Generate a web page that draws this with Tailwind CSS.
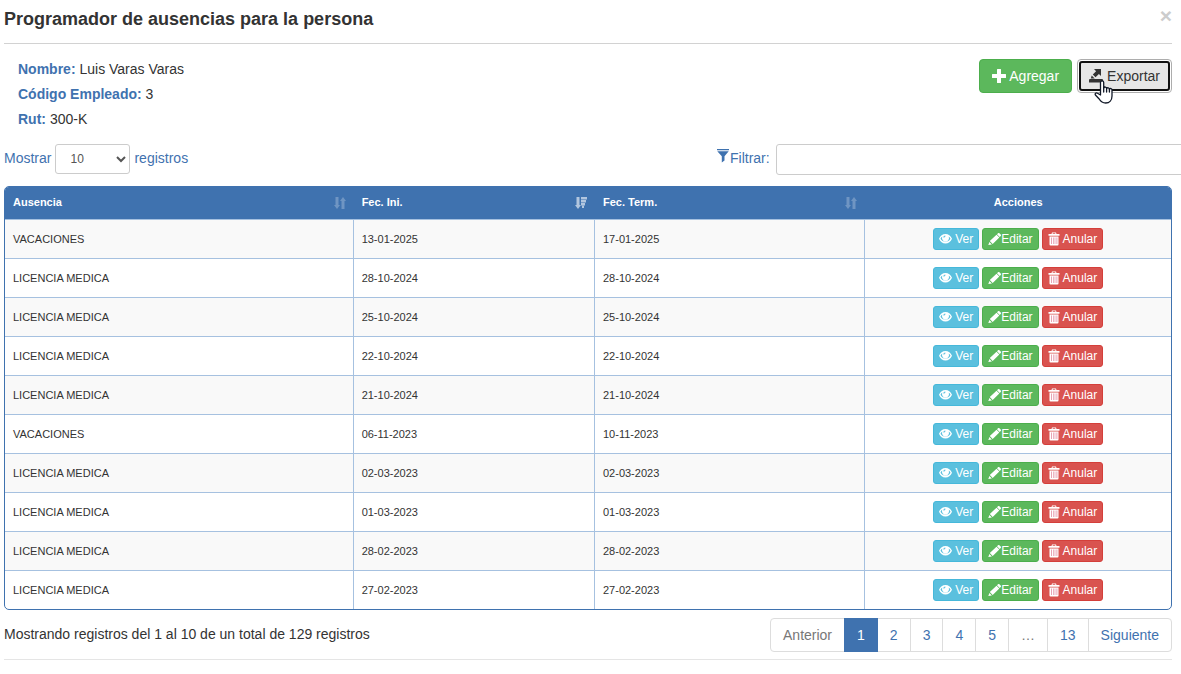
<!DOCTYPE html>
<html lang="es">
<head>
  <meta charset="UTF-8">
  <meta name="viewport" content="width=device-width, initial-scale=1.0">
  <title>Programador de ausencias</title>
  <script src="https://cdn.jsdelivr.net/npm/@tailwindcss/browser@4"></script>
</head>
<body class="bg-white text-[#333] text-sm font-['Liberation_Sans',Arial,sans-serif] overflow-x-hidden">

  <!-- Icons -->
  <svg class="hidden">
    <symbol id="plus" viewBox="0 0 14 14"><path d="M5.500 0h3a.5.5 0 0 1 .5.5V5h4.500a.5.5 0 0 1 .5.5v3a.5.5 0 0 1-.5.5H9v4.500a.5.5 0 0 1-.5.5h-3a.5.5 0 0 1-.5-.5V9H.5a.5.5 0 0 1-.5-.5v-3A.5.500 0 0 1 .5 5H5V.5a.5.5 0 0 1 .5-.5z"/></symbol>
    <symbol id="export" viewBox="0 0 14 14"><path d="M5 0h7v7L9.900 4.900 6.500 8.300 3.800 5.600 7.100 2.200zM2.700 6.500l3 3H1.800zM1 10h12a1 1 0 0 1 1 1v2.500H0V11a1 1 0 0 1 1-1z"/></symbol>
    <symbol id="filter" viewBox="0 0 12 14"><path d="M0 0h12v1.300H0zM.3 2.200h11.400L7.500 7.200v4.300L4.800 13.500V7.200z"/></symbol>
    <symbol id="sort" viewBox="0 0 12 12"><path d="M1.500 0h3v8H6l-3 4-3-4h1.500zM7.500 12V4H6l3-4 3 4h-1.500v8z"/></symbol>
    <symbol id="sort-desc" viewBox="0 0 12 12"><path d="M1.500 0h3v8H6l-3 4-3-4h1.500zM6 0h6v2.600H6zM6 3h5v2.600H6zM6 6h4v2.400H6zM7 8.800h2V11H7z"/></symbol>
    <symbol id="eye" viewBox="0 0 13 12"><path fill-rule="evenodd" d="M6.500 1C9.400 1 11.700 3 13 5.700 11.700 8.700 9.400 10.500 6.500 10.500S1.300 8.700 0 5.700C1.300 3 3.600 1 6.500 1zM3.300 3.600C2.400 4.200 1.800 4.900 1.500 5.700c1 1.900 2.800 3 5 3s4-1.100 5-3c-.3-.8-.9-1.500-1.800-2.100a3.500 3.500 0 1 1-6.400 0zM6.300 2.500c-1.200 0-1.900.8-2 1.900l1.200.2c.1-.7.4-1 1-1.100z"/></symbol>
    <symbol id="pencil" viewBox="0 0 13 12"><path d="M10 .3a1 1 0 0 1 1.400 0l1.300 1.300a1 1 0 0 1 0 1.400l-1 1L9 1.300zM8.500 1.700l2.800 2.800-6.600 6.400-2.900-2.800zM1.400 8.900l2.500 2.500L.3 12z"/></symbol>
    <symbol id="trash" viewBox="0 0 12 13"><path fill-rule="evenodd" d="M4 0h4l.5 1.500h3V3.200H.5V1.500h3zM4.800.8l-.2.700h2.800L7.200.8z"/><path d="M1.500 4h9v8a1 1 0 0 1-1 1h-7a1 1 0 0 1-1-1z"/><path d="M3 5h1v6.500H3zM5 5h.8v6.500H5zM6.600 5h.8v6.500h-.8zM8.400 5h1v6.500h-1z" fill="#e9a3b4"/></symbol>
  </svg>

  <div class="pl-1 pr-[9px]">
    <!-- Header -->
    <header class="flex justify-between items-start h-11 pt-1 border-b border-[#d2d2d2]">
      <h4 class="text-lg font-bold leading-[30px]">Programador de ausencias para la persona</h4>
      <button type="button" aria-label="Cerrar" class="text-[21px] font-bold leading-6 text-[#ccc]">&times;</button>
    </header>

    <!-- Employee -->
    <section class="flex justify-between items-start pt-[13px] h-[100px]">
      <div class="pl-[14px] leading-[25px]">
        <p><b class="text-[#3f72af]">Nombre:</b> Luis Varas Varas</p>
        <p><b class="text-[#3f72af]">Código Empleado:</b> 3</p>
        <p><b class="text-[#3f72af]">Rut:</b> 300-K</p>
      </div>
      <div class="flex gap-[5px] pt-[2px]">
        <button type="button" class="flex items-center gap-[3px] h-[34px] px-3 rounded border border-[#4cae4c] bg-[#5cb85c] text-white">
          <svg class="size-[14px] fill-current"><use href="#plus"/></svg>Agregar
        </button>
        <button type="button" class="relative h-[34px] p-px rounded border border-[#adadad] bg-white">
          <span class="flex items-center gap-1 h-full px-2 rounded-[3px] border-2 border-[#111] bg-[#e6e6e6]">
            <svg class="size-[14px] fill-current"><use href="#export"/></svg>Exportar
          </span>
          <!-- Pointer -->
          <svg class="absolute left-4 top-5 w-[19px] h-6" viewBox="0 0 19 24" fill="#fff" stroke="#111827" stroke-width="1.300" stroke-linejoin="round" stroke-linecap="round">
            <path d="M6.500 15V2.500a1.600 1.600 0 0 1 3.200 0V8a1.500 1.500 0 0 1 2.900.5A1.500 1.500 0 0 1 15.400 9.200 1.400 1.400 0 0 1 18 10v6c0 4-2.500 7-6.300 7-3.500 0-5-1.500-6.500-4L1.400 15c-.9-1.500.8-2.700 2.100-1.700z"/>
            <path d="M9.700 7.500V12M12.600 8.500V12M15.400 9.200V12"/>
          </svg>
        </button>
      </div>
    </section>

    <!-- Length and filter -->
    <div class="flex justify-between h-[42px] text-[#3f72af]">
      <div class="flex items-start gap-1">
        <label for="length" class="leading-7">Mostrar</label>
        <select id="length" class="h-[30px] w-[75px] px-[10px] rounded-[3px] border border-[#ccc] bg-white text-xs text-[#555]">
          <option>10</option>
          <option>25</option>
          <option>50</option>
        </select>
        <span class="leading-7">registros</span>
      </div>
      <div class="flex items-start gap-[6px] w-[471px] -mr-4">
        <label for="filter" class="flex leading-7"><svg class="w-3 h-[14px] mt-[5px] mr-px fill-current"><use href="#filter"/></svg>Filtrar:</label>
        <input id="filter" type="search" class="flex-1 h-[31px] px-2 rounded-[3px] border border-[#ccc] bg-white text-xs text-[#555]">
      </div>
    </div>

    <!-- Absences -->
    <div class="rounded-[5px] border border-[#3f72af] overflow-hidden">
      <table class="w-full table-fixed border-separate border-spacing-0 text-[11px]">
        <thead class="bg-[#3f72af] text-white text-left">
          <tr class="h-8">
            <th class="w-[29.9%] px-2"><div class="flex items-center justify-between">Ausencia<svg class="size-3 fill-white/25"><use href="#sort"/></svg></div></th>
            <th class="w-[20.7%] px-2"><div class="flex items-center justify-between">Fec. Ini.<svg class="size-3 fill-white/60"><use href="#sort-desc"/></svg></div></th>
            <th class="w-[23.2%] px-2"><div class="flex items-center justify-between">Fec. Term.<svg class="size-3 fill-white/25"><use href="#sort"/></svg></div></th>
            <th class="px-2 text-center">Acciones</th>
          </tr>
        </thead>
        <tbody id="rows"></tbody>
      </table>
    </div>

    <!-- Pagination -->
    <div class="flex justify-between items-start pt-2 pb-[7px] border-b border-[#e5e5e5]">
      <p class="leading-8">Mostrando registros del 1 al 10 de un total de 129 registros</p>
      <nav class="flex h-[34px] leading-8 rounded border border-[#ddd] text-[#3f72af]">
        <a href="#" class="px-3 text-[#777]">Anterior</a>
        <a href="#" class="-my-px px-3 border border-[#3f72af] bg-[#3f72af] text-white">1</a>
        <a href="#" class="px-3">2</a>
        <a href="#" class="px-3 border-l border-[#ddd]">3</a>
        <a href="#" class="px-3 border-l border-[#ddd]">4</a>
        <a href="#" class="px-3 border-l border-[#ddd]">5</a>
        <span class="px-3 border-l border-[#ddd] text-[#777]">…</span>
        <a href="#" class="px-3 border-l border-[#ddd]">13</a>
        <a href="#" class="px-3 border-l border-[#ddd]">Siguiente</a>
      </nav>
    </div>
  </div>

  <script>
    const ausencias = [
      ["VACACIONES", "13-01-2025", "17-01-2025"],
      ["LICENCIA MEDICA", "28-10-2024", "28-10-2024"],
      ["LICENCIA MEDICA", "25-10-2024", "25-10-2024"],
      ["LICENCIA MEDICA", "22-10-2024", "22-10-2024"],
      ["LICENCIA MEDICA", "21-10-2024", "21-10-2024"],
      ["VACACIONES", "06-11-2023", "10-11-2023"],
      ["LICENCIA MEDICA", "02-03-2023", "02-03-2023"],
      ["LICENCIA MEDICA", "01-03-2023", "01-03-2023"],
      ["LICENCIA MEDICA", "28-02-2023", "28-02-2023"],
      ["LICENCIA MEDICA", "27-02-2023", "27-02-2023"]
    ];

    document.getElementById("rows").innerHTML = ausencias.map(([tipo, inicio, termino]) => `
      <tr class="odd:bg-[#f9f9f9]">
        <td class="px-2 pt-[2px] border-t border-r border-[#a6c1e0]">${tipo}</td>
        <td class="px-2 pt-[2px] border-t border-r border-[#a6c1e0]">${inicio}</td>
        <td class="px-2 pt-[2px] border-t border-r border-[#a6c1e0]">${termino}</td>
        <td class="p-2 border-t border-[#a6c1e0]">
          <div class="flex justify-center gap-[3px] text-xs text-white">
            <button type="button" class="flex items-center gap-[3px] h-[22px] px-[5px] rounded-[3px] border border-[#46b8da] bg-[#5bc0de]"><svg class="w-[13px] h-3 fill-current"><use href="#eye"/></svg>Ver</button>
            <button type="button" class="flex items-center h-[22px] px-[5px] rounded-[3px] border border-[#4cae4c] bg-[#5cb85c]"><svg class="w-[13px] h-3 fill-current"><use href="#pencil"/></svg>Editar</button>
            <button type="button" class="flex items-center gap-[3px] h-[22px] px-[5px] rounded-[3px] border border-[#d43f3a] bg-[#d9534f]"><svg class="w-3 h-[14px] fill-current"><use href="#trash"/></svg>Anular</button>
          </div>
        </td>
      </tr>
    `).join("");
  </script>
</body>
</html>
